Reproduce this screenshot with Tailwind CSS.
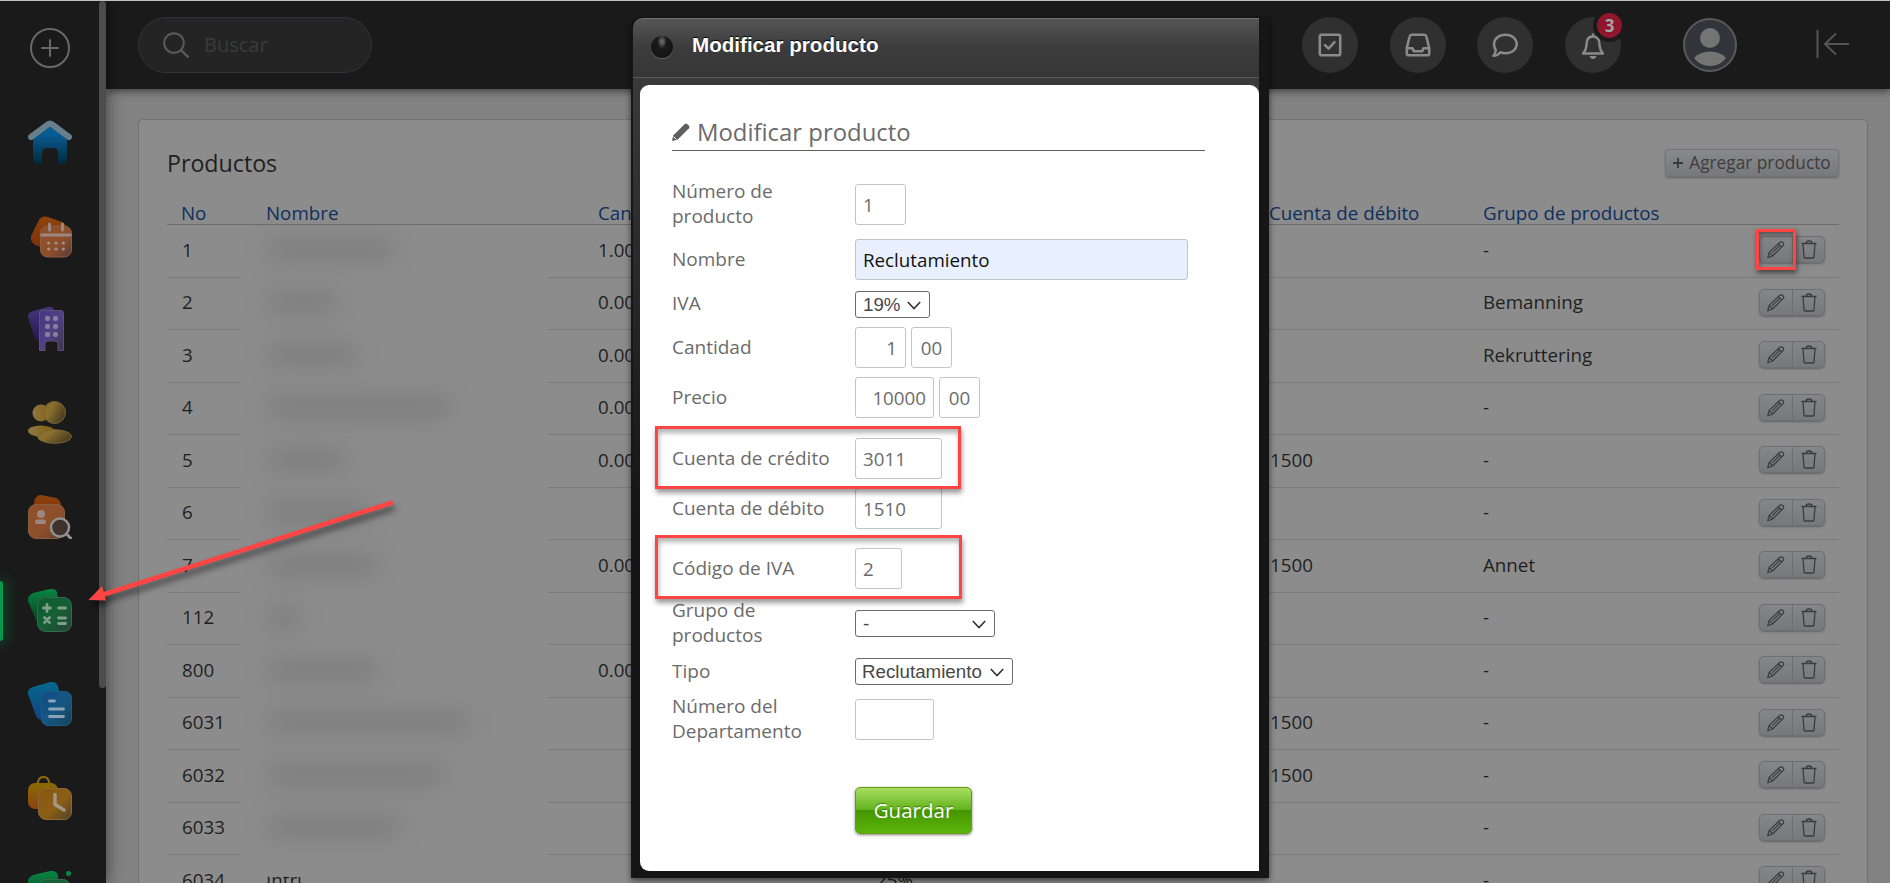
<!DOCTYPE html>
<html lang="es">

<head>
  <meta charset="UTF-8" />
  <meta name="viewport" content="width=device-width, initial-scale=1.0" />
  <title>Productos</title>
  <script src="https://cdn.jsdelivr.net/npm/@tailwindcss/browser@4"></script>
</head>

<body class="h-[883px] w-[1890px] overflow-hidden bg-[#828282] font-['Open_Sans','Noto_Sans',sans-serif] text-[18.75px] text-[#1f1f1f]">
  <div class="relative flex h-[883px] overflow-hidden border-t border-[#bcc4bf]">

    <!-- Sidebar -->
    <aside class="relative z-10 flex h-full w-[106px] shrink-0 bg-[#1a1a1a] shadow-[2px_0_14px_rgba(0,0,0,0.45)]">
      <nav class="flex w-[99px] shrink-0 flex-col items-center">
        <svg class="mt-[27px] size-[40px] shrink-0" viewBox="0 0 40 40" fill="none" stroke="#686868" stroke-width="2" stroke-linecap="round"><circle cx="20" cy="20" r="19" /><path d="M20 12v16M12 20h16" /></svg>
        <!-- inicio -->
        <svg class="mt-[52px] size-[44px] shrink-0" viewBox="0 0 44 44">
          <defs>
            <linearGradient id="gHome" x1="0" y1="0" x2="0" y2="1"><stop offset=".25" stop-color="#085a92" /><stop offset="1" stop-color="#022a3a" /></linearGradient>
            <linearGradient id="gOrange" x1="0" y1="0" x2="0" y2="1"><stop stop-color="#8e430c" /><stop offset="1" stop-color="#7e2f08" /></linearGradient>
            <linearGradient id="gGlassO" x1="0" y1="0" x2="1" y2="1"><stop stop-color="#90502a" /><stop offset=".6" stop-color="#8d4f2b" /><stop offset="1" stop-color="#523c3a" /></linearGradient>
            <linearGradient id="gPurple" x1="0" y1="0" x2="0" y2="1"><stop stop-color="#43387e" /><stop offset="1" stop-color="#251950" /></linearGradient>
            <linearGradient id="gGlassP" x1="0" y1="0" x2="1" y2="1"><stop stop-color="#44377f" /><stop offset=".5" stop-color="#4f4188" /><stop offset="1" stop-color="#3c3749" /></linearGradient>
            <linearGradient id="gGold" x1="0" y1="0" x2="1" y2="0"><stop stop-color="#8e7846" /><stop offset="1" stop-color="#85600c" /></linearGradient>
            <linearGradient id="gGlassG" x1="0" y1="0" x2="1" y2=".5"><stop stop-color="#83662a" /><stop offset=".4" stop-color="#8b702f" /><stop offset="1" stop-color="#4b3d20" /></linearGradient>
            <linearGradient id="gGreen" x1="0" y1="0" x2="0" y2="1"><stop stop-color="#078642" /><stop offset="1" stop-color="#0c3f20" /></linearGradient>
            <linearGradient id="gGlassGr" x1="0" y1="0" x2="1" y2="1"><stop stop-color="#0d5c30" /><stop offset=".5" stop-color="#156035" /><stop offset="1" stop-color="#264234" /></linearGradient>
            <linearGradient id="gBlue" x1="0" y1="0" x2="0" y2="1"><stop stop-color="#05688c" /><stop offset="1" stop-color="#154481" /></linearGradient>
            <linearGradient id="gGlassB" x1="0" y1="0" x2="1" y2="1"><stop stop-color="#124a83" /><stop offset=".5" stop-color="#165784" /><stop offset="1" stop-color="#154357" /></linearGradient>
            <linearGradient id="gBag" x1="0" y1="0" x2="0" y2="1"><stop stop-color="#8a6a05" /><stop offset="1" stop-color="#8a4410" /></linearGradient>
            <linearGradient id="gGlassBag" x1="0" y1="0" x2="1" y2="1"><stop stop-color="#86560f" /><stop offset=".55" stop-color="#8d5f15" /><stop offset="1" stop-color="#4d3f2a" /></linearGradient>
          </defs>
          <path d="M5 17 22 5l17 12v21q0 6-6 6h-3V33q0-5-5-5h-6q-5 0-5 5v11h-3q-6 0-6-6Z" fill="url(#gHome)" />
          <path d="M3 17 19.500 4.600q2.500-2 5 0L41 17" fill="none" stroke="#667f8a" stroke-width="6" stroke-linecap="round" />
        </svg>
        <!-- calendario -->
        <svg class="mt-[51px] size-[44px] shrink-0" viewBox="0 0 44 44">
          <path d="M11 5q3-5 9-3l14 5q6 3 4 9l-8 15q-3 5-9 4L7 30q-5-3-4-9Z" fill="url(#gOrange)" />
          <rect x="12.500" y="11" width="31" height="31" rx="7" fill="url(#gGlassO)" stroke="#8a5c40" />
          <path d="M21.500 9v6M34.500 9v6" stroke="#9c8880" stroke-width="3" stroke-linecap="round" /><path d="M14 20h28" stroke="#9c8880" stroke-width="3.200" stroke-linecap="round" />
          <path d="M20.700 28h.01M28 28h.01M35.300 28h.01M20.700 34h.01M28 34h.01M35.300 34h.01" stroke="#a39188" stroke-width="3.200" stroke-linecap="round" />
        </svg>
        <!-- empresas -->
        <svg class="mt-[48px] size-[44px] shrink-0" viewBox="0 0 44 44">
          <path d="M5 4 20 0q5-1 6 3l5 25-19 5q-5 1-6-4L0 10q-1-4 5-6Z" fill="url(#gPurple)" />
          <path d="M11.500 43.500V6q0-2.500 2.500-2.500h19q2.500 0 2.500 2.500v37.500H30V37q0-3-3-3h-7q-3 0-3 3v6.500Z" fill="url(#gGlassP)" stroke="#5b5173" />
          <g fill="#8a7f97"><rect x="17" y="9" width="5" height="5" rx="2" /><rect x="25" y="9" width="5" height="5" rx="2" /><rect x="17" y="17" width="5" height="5" rx="2" /><rect x="25" y="17" width="5" height="5" rx="2" /><rect x="17" y="25" width="5" height="5" rx="2" /><rect x="25" y="25" width="5" height="5" rx="2" /></g>
        </svg>
        <!-- personas -->
        <svg class="mt-[50px] size-[44px] shrink-0" viewBox="0 0 44 44">
          <circle cx="13" cy="12" r="8.500" fill="url(#gGold)" /><ellipse cx="13" cy="30" rx="13" ry="5.500" fill="url(#gGold)" />
          <circle cx="26.500" cy="11.500" r="11" fill="url(#gGlassG)" stroke="#7a6534" /><ellipse cx="26.500" cy="35.500" rx="17" ry="6.800" fill="url(#gGlassG)" stroke="#7a6534" />
        </svg>
        <!-- candidatos -->
        <svg class="mt-[50px] size-[44px] shrink-0" viewBox="0 0 44 44">
          <path d="M6 8Q7 0 13 0l15 3q5 2 5 8v8H6Z" fill="url(#gOrange)" />
          <rect x=".5" y="9.500" width="36" height="34" rx="7.500" fill="url(#gGlassO)" stroke="#8a5c40" />
          <circle cx="13" cy="19" r="4" fill="#9c8880" /><rect x="7" y="24.500" width="11" height="4.500" rx="2.200" fill="#9c8880" />
          <circle cx="32" cy="32.500" r="9" fill="#40302a" stroke="#909090" stroke-width="2.500" /><path d="m38.500 39 4 4" stroke="#909090" stroke-width="3" stroke-linecap="round" />
        </svg>
        <!-- economia (activo) -->
        <div class="relative mt-[50px] flex w-full shrink-0 justify-center">
          <span class="absolute -top-[8px] left-0 h-[60px] w-[3px] rounded-r-[3px] bg-[#079a4e] shadow-[0_0_14px_3px_rgba(7,154,78,0.45)]"></span>
          <svg class="size-[44px]" viewBox="0 0 44 44">
            <path d="M5 4 22 0q5-1 7 3l4 24-20 6q-5 1-6-4L0 12q-1-5 5-8Z" fill="url(#gGreen)" />
            <rect x="9.500" y="8.500" width="34" height="34" rx="8" fill="url(#gGlassGr)" stroke="#356b4c" />
            <path d="M15.500 19h7M19 15.500v7M30.500 19h7M16.500 28.500l5 5M21.500 28.500l-5 5M30.500 29h7M30.500 34.500h7" stroke="#7f9f8c" stroke-width="2.800" stroke-linecap="round" />
          </svg>
        </div>
        <!-- documentos -->
        <svg class="mt-[49px] size-[44px] shrink-0" viewBox="0 0 44 44">
          <path d="M5 5 22 0q6-1 8 4l5 25-18 8q-7 2-9-3L0 12q-1-5 5-7Z" fill="url(#gBlue)" />
          <rect x="13.500" y="9.500" width="30" height="34" rx="6.500" fill="url(#gGlassB)" stroke="#15607f" />
          <path d="M21.500 19h5M21.500 27h14M21.500 34.500h14" stroke="#8fa3b4" stroke-width="2.800" stroke-linecap="round" />
        </svg>
        <!-- tiempo -->
        <svg class="mt-[50px] size-[44px] shrink-0" viewBox="0 0 44 44">
          <path d="M9.500 10q0-9 6-9t6 9" fill="none" stroke="#86690a" stroke-width="2.200" />
          <rect x="0" y="7" width="30" height="26" rx="7" fill="url(#gBag)" />
          <rect x="10.500" y="12.500" width="33" height="31" rx="7.500" fill="url(#gGlassBag)" stroke="#8a6a38" />
          <path d="M27 18.500v10l9 5.500" fill="none" stroke="#a2988a" stroke-width="3.400" stroke-linecap="round" stroke-linejoin="round" />
        </svg>
        <svg class="mt-[51px] size-[44px] shrink-0" viewBox="0 0 44 44">
          <path d="M5 4 22 0q6-1 8 4v28H7L0 12q-1-5 5-8Z" fill="url(#gGreen)" />
          <rect x="10.500" y="8.500" width="31" height="34" rx="6" fill="#14613a" stroke="#356b4c" /><circle cx="40.500" cy="2.500" r="2.500" fill="#078a48" />
        </svg>
      </nav>
      <div class="h-[687px] w-[7px] rounded-full bg-[#4c4c4c]"></div>
    </aside>

    <div class="flex min-w-0 flex-1 flex-col">
      <!-- Top bar -->
      <header class="flex h-[88px] shrink-0 items-center bg-[#1a1a1a] pl-[32px] shadow-[0_2px_8px_rgba(0,0,0,0.55)]">
        <div class="flex h-[56px] w-[234px] shrink-0 items-center rounded-full border border-[#32323a] bg-[#242424] pl-[24px]">
          <svg class="size-[27px]" viewBox="0 0 27 27" fill="none" stroke="#5a5a5a" stroke-width="2"><circle cx="11" cy="11" r="9.800" /><path d="m18 18 7.500 7.500" stroke-width="2.400" /></svg>
          <span class="ml-[14px] text-[20px] text-[#3b3b3b]">Buscar</span>
        </div>
        <div class="ml-auto flex items-center gap-[31.7px]">
          <div class="flex size-[56px] items-center justify-center rounded-full bg-[#303030]">
            <svg class="size-[26px]" viewBox="0 0 26 26" fill="none" stroke="#8a8a8a" stroke-width="2.600" stroke-linejoin="round" stroke-linecap="round"><rect x="2.800" y="2.800" width="20.400" height="20.400" rx="1.500" /><path d="m8 13.200 3.500 3.500 6-6.500" /></svg>
          </div>
          <div class="flex size-[56px] items-center justify-center rounded-full bg-[#303030]">
            <svg class="size-[26px]" viewBox="0 0 26 26" fill="none" stroke="#8a8a8a" stroke-width="2.600" stroke-linejoin="round"><path d="M6.500 2.800h13q1.500 0 1.800 1.500L24.200 16v5.500q0 1.800-1.800 1.800H3.600q-1.800 0-1.800-1.800V16L4.700 4.300Q5 2.800 6.500 2.800Z" /><path d="M2 16.300h5.500l1.500 3h8l1.500-3H24" /></svg>
          </div>
          <div class="flex size-[56px] items-center justify-center rounded-full bg-[#303030]">
            <svg class="size-[26px]" viewBox="0 0 26 26" fill="none" stroke="#8a8a8a" stroke-width="2.500" stroke-linejoin="round"><path d="M13.500 2.800C20 2.800 24.800 6.700 24.800 12S20 21.300 13.500 21.300q-2.700 0-5-1.100Q5.500 23.800 1.500 23.800q2-2.500 2.300-5.800Q2 15.500 2 12C2 6.700 7 2.800 13.500 2.800Z" /></svg>
          </div>
          <div class="relative flex size-[56px] items-center justify-center rounded-full bg-[#303030]">
            <svg class="size-[28px]" viewBox="0 0 28 28" fill="none" stroke="#8a8a8a" stroke-width="2.400" stroke-linejoin="round"><path d="M14 2.500v2M4 22.500q3.500-4 3.500-9 0-8 6.500-8t6.500 8q0 5 3.500 9Z" /><path d="M10.500 25h7q-1 3-3.500 3t-3.500-3Z" fill="#8a8a8a" stroke="none" /></svg>
            <span class="absolute -top-[8px] left-[28px] flex size-[33px] items-center justify-center rounded-full border-[4.5px] border-[#1a1a1a] bg-[#8f162b] text-[17px] font-bold text-[#a5a5a5]">3</span>
          </div>
        </div>
        <svg class="ml-[62px] size-[54px] shrink-0" viewBox="0 0 54 54"><circle cx="27" cy="27" r="26" fill="#33333b" stroke="#595959" stroke-width="2" /><circle cx="27" cy="20" r="10" fill="#747474" /><path d="M11 40q5-6 16-6.500 11 .5 16 6.500-6 8-16 8t-16-8Z" fill="#747474" /></svg>
        <svg class="mr-[40px] ml-[79px] mb-[2px] h-[28px] w-[34px] shrink-0" viewBox="0 0 34 28" fill="none" stroke="#555" stroke-width="2"><path d="M1.500 0v28M33 14H9M20 3.500 9 14l11 10.500" /></svg>
      </header>

      <!-- Products -->
      <main class="mt-[30px] ml-[32px] flex h-[900px] w-[1730px] flex-col rounded-[5px] border border-[#717171] bg-[#8c8c8c] pl-[28px]">
        <div class="flex h-[80px] w-[1672px] items-end justify-between">
          <h1 class="mb-[22px] text-[23.200px] leading-[30px]">Productos</h1>
          <button class="mb-[23px] flex h-[28px] w-[174px] items-center justify-center gap-[6px] rounded-[4px] border border-[#747477] bg-linear-to-b from-[#88898c] to-[#77787c] text-[17.250px] text-[#3d3d3d] shadow-[0_1px_2px_rgba(0,0,0,0.3)]">
            <svg class="size-[10px]" viewBox="0 0 11 11" stroke="#3a3a3a" stroke-width="2"><path d="M5.500 0v11M0 5.500h11" /></svg>
            Agregar producto
          </button>
        </div>
        <div class="flex h-[25px] w-[1672px] items-center border-b border-[#6c6c6c] pt-[2px] text-[#0e2f5c]">
          <span class="w-[99px] pl-[14px]">No</span>
          <span class="w-[332px]">Nombre</span>
          <span class="w-[671px]">Cantidad</span>
          <span class="w-[214px]">Cuenta de débito</span>
          <span>Grupo de productos</span>
        </div>
        <div id="rows"></div>
      </main>
    </div>

    <!-- Arrow -->
    <svg class="absolute top-[480px] left-[80px] z-20 h-[140px] w-[330px] drop-shadow-[2px_5px_3px_rgba(0,0,0,0.55)]" viewBox="0 0 330 140"><path d="M311 22 22 114" stroke="#ff4444" stroke-width="4.500" stroke-linecap="round" /><path d="m8.500 119 13.500-14 4 14.500Z" fill="#ff4444" /></svg>

    <!-- Highlighted edit button -->
    <div class="absolute top-[228px] left-[1756px] z-20 h-[41px] w-[40px] border-[3px] border-[#ff4444] shadow-[1px_3px_5px_rgba(0,0,0,0.5),inset_1px_3px_5px_rgba(0,0,0,0.4)]"></div>

    <!-- Dialog -->
    <section class="absolute top-[17px] left-[631px] z-30 flex h-[860px] w-[638px] flex-col rounded-tl-[11px] bg-[#161616] pl-[2px] shadow-[0_2px_6px_rgba(0,0,0,0.6)]">
      <div class="flex h-[60px] w-[626px] shrink-0 items-center rounded-tl-[10px] border-t border-b border-t-[#707070] border-b-[#5a5a5a] bg-linear-to-b from-[#555] via-[#3c3c3c] via-50% to-[#363636] pl-[18px]">
        <span class="mt-[-2px] size-[22px] rounded-full bg-radial-[at_50%_25%] from-[#777] from-0% via-[#1a1a1a] via-30% to-[#111] shadow-[0_1px_1px_#666]"></span>
        <h2 class="mb-[6px] ml-[19px] font-['Liberation_Sans',Arial,sans-serif] text-[20.600px] font-bold text-white [text-shadow:0_-1px_1px_#000]">Modificar producto</h2>
      </div>
      <div class="flex w-[626px] flex-1 bg-linear-to-b from-[#3a3a3a] to-[#151515] to-55% pt-[7px] pl-[7px]">
        <div class="mb-[7px] flex flex-1 flex-col rounded-l-[9px] rounded-tr-[9px] bg-white pl-[32px] text-[#6b6b6b]">
          <div class="mt-[29px] flex h-[37px] w-[533px] items-center border-b-[1.500px] border-[#5f5f5f] text-[23.900px]">
            <svg class="mr-[7px] size-[18px]" viewBox="0 0 18 18"><path d="M1.200 12.500 12.800 1q1.200-1 2.400 0L17 2.800q1 1.200 0 2.400L5.500 16.800 0 18Z" fill="#5f5f5f" /><path d="m1.500 13.500 3 3" stroke="#fff" /></svg>
            Modificar producto
          </div>
          <form class="mt-[33px] flex flex-col leading-[25px]">
            <div class="flex h-[41px] items-center"><label class="w-[183px] pb-px text-[19px]">Número de<br>producto</label><div class="flex h-[41px] w-[51px] items-center rounded-[3px] border border-[#c4c4c4] pb-px pl-[7px]">1</div></div>
            <div class="mt-[14px] flex h-[41px] items-center"><label class="w-[183px] pb-px text-[19px]">Nombre</label><div class="flex h-[41px] w-[333px] items-center rounded-[3px] border border-[#c4c4c4] bg-[#e8f0fe] pb-px pl-[7px] text-[#111]">Reclutamiento</div></div>
            <div class="mt-[11px] flex h-[27px] items-center"><label class="w-[183px] pb-[2px] text-[19px]">IVA</label><div class="flex h-[27px] w-[75px] items-center justify-between rounded-[3px] border border-[#6b6b6b] pr-[8px] pl-[7px] font-['Liberation_Sans',Arial,sans-serif] text-[#484848]">19%<svg class="size-[14px]" viewBox="0 0 14 14" fill="none" stroke="#333" stroke-width="1.600"><path d="m.8 4 6.200 6.500L13.200 4" /></svg></div></div>
            <div class="mt-[9px] flex h-[41px] items-center"><label class="w-[183px] pb-px text-[19px]">Cantidad</label><div class="flex h-[41px] w-[51px] items-center justify-end rounded-[3px] border border-[#c4c4c4] pr-[8px] pb-px">1</div><div class="ml-[5px] flex h-[41px] w-[41px] items-center justify-center rounded-[3px] border border-[#c4c4c4] pb-px">00</div></div>
            <div class="mt-[9px] flex h-[41px] items-center"><label class="w-[183px] pb-px text-[19px]">Precio</label><div class="flex h-[41px] w-[79px] items-center justify-end rounded-[3px] border border-[#c4c4c4] pr-[7px] pb-px">10000</div><div class="ml-[5px] flex h-[41px] w-[41px] items-center justify-center rounded-[3px] border border-[#c4c4c4] pb-px">00</div></div>
            <div class="relative mt-[20px] flex h-[41px] items-center"><label class="w-[183px] pb-px text-[19px]">Cuenta de crédito</label><div class="flex h-[41px] w-[87px] items-center rounded-[3px] border border-[#c4c4c4] pb-px pl-[7px]">3011</div>
              <span class="absolute -top-[12px] -left-[17px] z-10 h-[63px] w-[306px] border-[3px] border-[#ff4444] shadow-[1px_4px_5px_rgba(0,0,0,0.4),inset_1px_4px_5px_rgba(0,0,0,0.3)]"></span></div>
            <div class="mt-[9px] flex h-[41px] items-center"><label class="w-[183px] pb-px text-[19px]">Cuenta de débito</label><div class="flex h-[41px] w-[87px] items-center rounded-[3px] border border-[#c4c4c4] pb-px pl-[7px]">1510</div></div>
            <div class="relative mt-[19px] flex h-[41px] items-center"><label class="w-[183px] pb-px text-[19px]">Código de IVA</label><div class="flex h-[41px] w-[47px] items-center rounded-[3px] border border-[#c4c4c4] pb-px pl-[7px]">2</div>
              <span class="absolute -top-[13px] -left-[17px] z-10 h-[64px] w-[307px] border-[3px] border-[#ff4444] shadow-[1px_4px_5px_rgba(0,0,0,0.4),inset_1px_4px_5px_rgba(0,0,0,0.3)]"></span></div>
            <div class="mt-[21px] flex h-[27px] items-center"><label class="w-[183px] pb-[2px] text-[19px]">Grupo de<br>productos</label><div class="flex h-[27px] w-[140px] items-center justify-between rounded-[3px] border border-[#6b6b6b] pr-[8px] pl-[7px] font-['Liberation_Sans',Arial,sans-serif] text-[#484848]">-<svg class="size-[14px]" viewBox="0 0 14 14" fill="none" stroke="#333" stroke-width="1.600"><path d="m.8 4 6.200 6.500L13.200 4" /></svg></div></div>
            <div class="mt-[21px] flex h-[27px] items-center"><label class="w-[183px] text-[19px]">Tipo</label><div class="flex h-[27px] w-[158px] items-center justify-between rounded-[3px] border border-[#6b6b6b] pr-[8px] pl-[6px] font-['Liberation_Sans',Arial,sans-serif] text-[#484848]">Reclutamiento<svg class="size-[14px]" viewBox="0 0 14 14" fill="none" stroke="#333" stroke-width="1.600"><path d="m.8 4 6.200 6.500L13.200 4" /></svg></div></div>
            <div class="mt-[14px] flex h-[41px] items-center"><label class="w-[183px] pb-px text-[19px]">Número del<br>Departamento</label><div class="h-[41px] w-[79px] rounded-[3px] border border-[#c4c4c4]"></div></div>
            <button type="button" class="mt-[47px] ml-[183px] h-[47px] w-[117px] rounded-[5px] border border-[#6a9a12] bg-[linear-gradient(#a8dc62,#62b31c_49%,#459600_50%,#5cb50a)] text-[20.500px] text-white shadow-[0_1px_3px_rgba(0,0,0,0.5)] [text-shadow:0_-1px_1px_#3a7a00]">Guardar</button>
          </form>
        </div>
      </div>
    </section>
  </div>

  <template id="row">
    <div class="h-[52.5px] w-[1672px]">
      <div class="flex h-[51.5px] items-center pb-[2px]">
        <span class="no w-[99px] pl-[15px]"></span>
        <span class="name w-[332px]"><i class="block h-[24px] rounded-full bg-[#7a7a7a] opacity-75 blur-[11px]"></i></span>
        <span class="qty w-[278px]"></span>
        <span class="vat w-[394px]"></span>
        <span class="debit w-[213px]"></span>
        <span class="group w-[276px]"></span>
        <span class="flex h-[27px] w-[66px] rounded-[5px] border border-[#6f6f72] bg-linear-to-b from-[#858689] to-[#77787c] shadow-[0_1px_2px_rgba(0,0,0,0.3)]">
          <svg class="w-[33px] border-r border-[#6f6f72]" viewBox="0 0 33 25" fill="none" stroke="#3c3c3c" stroke-width="1.300" stroke-linejoin="round"><path d="m8 21 1.500-5.500L20.500 5q1.500-1 3 .3t.5 3L13 19.200ZM9.500 15.500l3.500 3.700M19 6.500l3.500 3.500M12.500 16l8-8" /></svg>
          <svg class="w-[31px]" viewBox="0 0 31 25" fill="none" stroke="#3c3c3c" stroke-width="1.300" stroke-linejoin="round"><path d="M8.500 6.500h15M10 6.500l1 13.500q0 1 1 1h8q1 0 1-1l1-13.500M13 6.500q0-2.500 3-2.500t3 2.500" /></svg>
        </span>
      </div>
      <div class="flex justify-between"><b class="h-px w-[73px] bg-[#7a7a7a]"></b><b class="h-px w-[1291px] bg-[#7a7a7a]"></b></div>
    </div>
  </template>

  <script>
    // no, ancho del nombre oculto, cantidad, cuenta de débito, grupo
    const products = [
      ['1', 128, '1.00', '', '-'],
      ['2', 72, '0.00', '', 'Bemanning'],
      ['3', 92, '0.00', '', 'Rekruttering'],
      ['4', 185, '0.00', '', '-'],
      ['5', 80, '0.00', '1500', '-'],
      ['6', 105, '', '', '-'],
      ['7', 112, '0.00', '1500', 'Annet'],
      ['112', 36, '', '', '-'],
      ['800', 112, '0.00', '', '-'],
      ['6031', 205, '', '1500', '-'],
      ['6032', 178, '', '1500', '-'],
      ['6033', 135, '', '', '-'],
      ['6034', 0, '', '', '-']
    ];
    const tpl = document.getElementById('row');
    products.forEach(([no, width, qty, debit, group]) => {
      const row = tpl.content.cloneNode(true);
      row.querySelector('.no').textContent = no;
      row.querySelector('.qty').textContent = qty;
      row.querySelector('.debit').textContent = debit;
      row.querySelector('.group').textContent = group;
      if (width) {
        row.querySelector('.name i').style.width = width + 'px';
      } else {
        row.querySelector('.name').innerHTML = '<span class="inline-block [clip-path:inset(11px_0_0_0)]">Intri</span>';
        row.querySelector('.vat').textContent = '25%';
      }
      document.getElementById('rows').appendChild(row);
    });
  </script>
</body>

</html>
